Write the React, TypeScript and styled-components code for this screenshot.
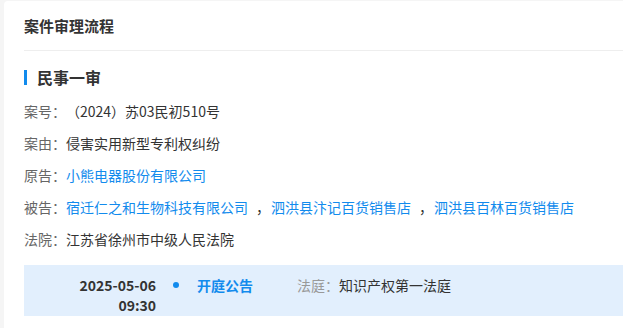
import React from 'react';
import styled, { createGlobalStyle } from 'styled-components';

const GlobalStyle = createGlobalStyle`
  html, body {
    margin: 0;
    padding: 0;
    background: #f5f5f5;
    overflow: hidden;
  }
  body {
    font-family: "Noto Sans CJK SC", "Noto Sans", sans-serif;
    font-size: 14px;
    color: #333;
    text-spacing-trim: space-all;
  }
`;

const Card = styled.div`
  margin: 1px 0 0 4px;
  height: 340px;
  background: #fff;
  border-top-left-radius: 4px;
  padding-left: 20px;
`;

const Header = styled.div`
  height: 49px;
  line-height: 49px;
  font-size: 15px;
  font-weight: 700;
  color: #333;
  border-bottom: 1px solid #eee;
`;

const SectionTitle = styled.div`
  display: flex;
  align-items: center;
  margin-top: 15px;
  height: 22px;
  font-size: 16px;
  font-weight: 700;
  color: #333;

  &::before {
    content: '';
    width: 3px;
    height: 15px;
    margin-right: 10px;
    background: #128bed;
  }
`;

const InfoList = styled.div`
  margin-top: 12px;
`;

const InfoRow = styled.div`
  line-height: 22px;
  margin-bottom: 10px;
  white-space: nowrap;
`;

const Label = styled.span`
  color: #666;
`;

const Value = styled.span`
  color: #333;
`;

const Link = styled.a`
  color: #128bed;
  text-decoration: none;
`;

const Sep = styled.span`
  display: inline-block;
  margin: 0 1px 0 8px;
  color: #333;
`;

const Timeline = styled.div`
  display: flex;
  align-items: flex-start;
  margin-top: 15px;
  height: 51px;
  padding-top: 10px;
  box-sizing: border-box;
  background: #e2effd;
`;

const DateCol = styled.div`
  width: 132px;
  text-align: right;
  font-weight: 700;
  line-height: 20px;
  color: #333;
`;

const DotCol = styled.div`
  width: 40px;
  height: 20px;
  display: flex;
  align-items: center;
  justify-content: center;
`;

const Dot = styled.span`
  width: 6px;
  height: 6px;
  border-radius: 50%;
  background: #128bed;
`;

const EventTitle = styled.div`
  width: 100px;
  margin-left: 1px;
  line-height: 20px;
  font-weight: 700;
  color: #128bed;
`;

const EventDetail = styled.div`
  line-height: 20px;
`;

const Muted = styled.span`
  color: #999;
`;

const defendants = ['宿迁仁之和生物科技有限公司', '泗洪县汴记百货销售店', '泗洪县百林百货销售店'];

export default function App() {
  return (
    <>
      <GlobalStyle />
      <Card>
        <Header>案件审理流程</Header>
        <SectionTitle>民事一审</SectionTitle>
        <InfoList>
          <InfoRow>
            <Label>案号：</Label>
            <Value>（2024）苏03民初510号</Value>
          </InfoRow>
          <InfoRow>
            <Label>案由：</Label>
            <Value>侵害实用新型专利权纠纷</Value>
          </InfoRow>
          <InfoRow>
            <Label>原告：</Label>
            <Link>小熊电器股份有限公司</Link>
          </InfoRow>
          <InfoRow>
            <Label>被告：</Label>
            {defendants.map((d, i) => (
              <React.Fragment key={d}>
                {i > 0 && <Sep>，</Sep>}
                <Link>{d}</Link>
              </React.Fragment>
            ))}
          </InfoRow>
          <InfoRow>
            <Label>法院：</Label>
            <Value>江苏省徐州市中级人民法院</Value>
          </InfoRow>
        </InfoList>
        <Timeline>
          <DateCol>
            2025-05-06
            <br />
            09:30
          </DateCol>
          <DotCol>
            <Dot />
          </DotCol>
          <EventTitle>开庭公告</EventTitle>
          <EventDetail>
            <Muted>法庭：</Muted>
            知识产权第一法庭
          </EventDetail>
        </Timeline>
      </Card>
    </>
  );
}
